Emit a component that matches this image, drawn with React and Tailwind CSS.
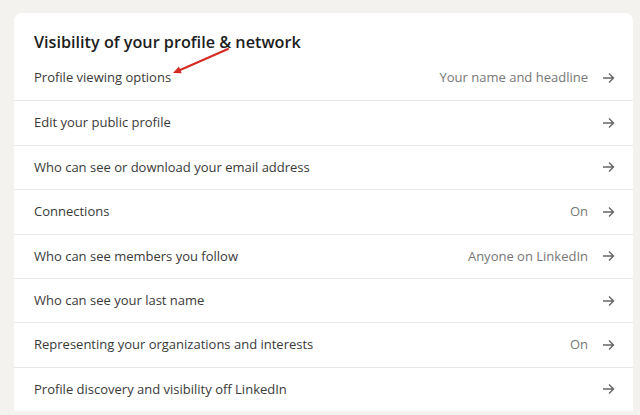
import React from "react";

const rows = [
  { label: "Profile viewing options", value: "Your name and headline" },
  { label: "Edit your public profile", value: "" },
  { label: "Who can see or download your email address", value: "" },
  { label: "Connections", value: "On" },
  { label: "Who can see members you follow", value: "Anyone on LinkedIn" },
  { label: "Who can see your last name", value: "" },
  { label: "Representing your organizations and interests", value: "On" },
  { label: "Profile discovery and visibility off LinkedIn", value: "" },
];

const Arrow = () => (
  <svg width="13" height="12" viewBox="0 0 13 12" fill="none" className="text-[#666666]">
    <path d="M1 6h10.5M7 1.5L11.5 6 7 10.5" stroke="currentColor" strokeWidth="1.4" />
  </svg>
);

const App = () => {
  return (
    <div className="w-[640px] h-[415px] overflow-hidden bg-[#f4f2ee] pt-[13px] pl-[14px] pr-[7px] font-['Open_Sans',sans-serif]">
      <div className="relative bg-white rounded-t-lg">
        {/* header */}
        <h2 className="px-5 pt-[18px] pb-[3px] text-[16.2px] leading-[22px] font-semibold text-[#1d1d1d]">
          Visibility of your profile &amp; network
        </h2>

        {rows.map((row, i) => (
          <div
            key={i}
            className={`flex items-center justify-between h-[44.4px] px-5 ${i === 0 ? "" : "border-t border-[#e8e8e8]"}`}
          >
            <span className="text-[13px] text-[#3a3a3a]">{row.label}</span>
            <div className="flex items-center gap-[14px] pr-[-1px] mr-[-2px]">
              {row.value && <span className="text-[13px] text-[#777777]">{row.value}</span>}
              <Arrow />
            </div>
          </div>
        ))}

        {/* red annotation arrow */}
        <svg className="absolute left-[150px] top-[30px]" width="80" height="40" viewBox="0 0 80 40" fill="none">
          <path d="M64 6L15 27.5" stroke="#d42a22" strokeWidth="2" strokeLinecap="round" />
          <path d="M9 30L17.7 30.2 14.9 23.4z" fill="#d42a22" />
        </svg>
      </div>
    </div>
  );
};

export default App;
